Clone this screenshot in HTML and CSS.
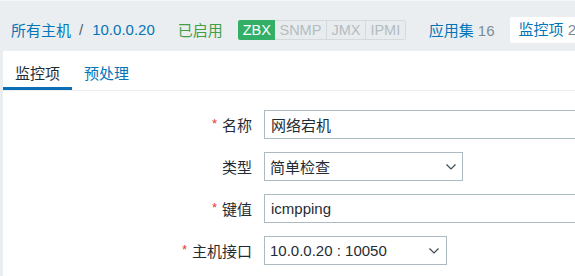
FILE: index.html
```html
<!DOCTYPE html>
<html>
<head>
  <title>监控项</title>
  <meta name="viewport" content="width=device-width, initial-scale=1.0">
  <link rel="stylesheet" href="styles.css">
</head>
<body>
  <header class="top-bar">
    <a class="crumb" href="#">所有主机</a>
    <span class="sep">/</span>
    <a class="crumb" href="#">10.0.0.20</a>
    <span class="status">已启用</span>
    <div class="avail">
      <span class="avail-on">ZBX</span>
      <div class="avail-off">
        <span>SNMP</span>
        <span>JMX</span>
        <span>IPMI</span>
      </div>
    </div>
    <a class="nav-link" href="#">应用集 <span class="count">16</span></a>
    <a class="nav-link nav-current" href="#">监控项 <span class="count">2</span></a>
  </header>

  <main class="panel">
    <ul class="tabs">
      <li class="tab tab-active">监控项</li>
      <li class="tab">预处理</li>
    </ul>

    <form class="form-grid">
      <label class="field-label required">名称</label>
      <input class="text-input wide" type="text" value="网络宕机">

      <label class="field-label">类型</label>
      <div class="select type-select">
        <span>简单检查</span>
        <svg class="chevron" width="10" height="6" viewBox="0 0 10 6"><path d="M0.5 0.5 L5 5 L9.5 0.5" fill="none" stroke="#3b4a53" stroke-width="1.2"/></svg>
      </div>

      <label class="field-label required">键值</label>
      <input class="text-input wide" type="text" value="icmpping">

      <label class="field-label required">主机接口</label>
      <div class="select iface-select">
        <span>10.0.0.20 : 10050</span>
        <svg class="chevron" width="10" height="6" viewBox="0 0 10 6"><path d="M0.5 0.5 L5 5 L9.5 0.5" fill="none" stroke="#3b4a53" stroke-width="1.2"/></svg>
      </div>
    </form>
  </main>
</body>
</html>
```

FILE: styles.css
```css
body {
  margin: 0;
  background-color: #ebeef0;
  font-family: "Liberation Sans", "Noto Sans CJK SC", sans-serif;
  font-size: 15px;
  color: #1f2c33;
  overflow: hidden;
}

a {
  text-decoration: none;
  color: #0275b8;
}

.top-bar {
  display: flex;
  align-items: center;
  height: 51px;
  box-sizing: border-box;
  padding: 7px 0 0 11px;
  border-top: 1px solid #f3f5f6;
  white-space: nowrap;
}

.sep {
  margin: 0 9px 0 8px;
  color: #4f5f68;
}

.status {
  margin-left: 23px;
  color: #429e47;
}

.avail {
  display: flex;
  margin-left: 15px;
  height: 20px;
  line-height: 20px;
  font-size: 14.5px;
}

.avail-on {
  background-color: #34af67;
  color: #fff;
  padding: 0 4px 0 5px;
  border-radius: 2px 0 0 2px;
}

.avail-off {
  display: flex;
  border: 1px solid #d4d9dc;
  border-left: none;
  border-radius: 0 2px 2px 0;
  height: 18px;
  line-height: 18px;
  background-color: #e9ecee;
}

.avail-off span {
  color: #b3bcc1;
  padding: 0 4.5px;
  border-right: 1px solid #d4d9dc;
}

.avail-off span:last-child {
  border-right: none;
}

.nav-link {
  margin-left: 23px;
}

.count {
  color: #768d99;
}

.nav-current {
  margin-left: 15px;
  background-color: #fff;
  padding: 0 9px;
  height: 26px;
  line-height: 26px;
  border-radius: 2px;
}

.panel {
  margin-left: 3px;
  background-color: #fff;
  height: 230px;
}

.tabs {
  display: flex;
  margin: 0;
  padding: 0;
  list-style: none;
  border-bottom: 1px solid #ebeef0;
}

.tab {
  height: 39px;
  box-sizing: border-box;
  padding: 6px 12px 0 12px;
  display: flex;
  align-items: center;
  border-bottom: 3px solid transparent;
  color: #0275b8;
}

.tab-active {
  color: #1f2c33;
  border-bottom-color: #0a6fb5;
}

.form-grid {
  display: grid;
  grid-template-columns: 249px auto;
  column-gap: 12px;
  row-gap: 13px;
  padding-top: 19px;
  justify-items: start;
  align-items: center;
}

.field-label {
  justify-self: end;
  color: #1f2c33;
}

.required::before {
  content: "*";
  color: #e33734;
  font-size: 13px;
  vertical-align: 3px;
  margin-right: 5px;
}

.text-input {
  height: 29px;
  box-sizing: border-box;
  border: 1px solid #acbbc2;
  padding: 0 6px;
  font-family: inherit;
  font-size: 15px;
  color: #1f2c33;
  outline: none;
}

.wide {
  width: 544px;
}

.select {
  display: flex;
  align-items: center;
  justify-content: space-between;
  height: 29px;
  box-sizing: border-box;
  border: 1px solid #acbbc2;
  padding: 0 6px 0 5px;
}

.type-select {
  width: 199px;
}

.iface-select {
  width: 183px;
  padding-right: 7px;
}

.chevron {
  display: block;
}
```
